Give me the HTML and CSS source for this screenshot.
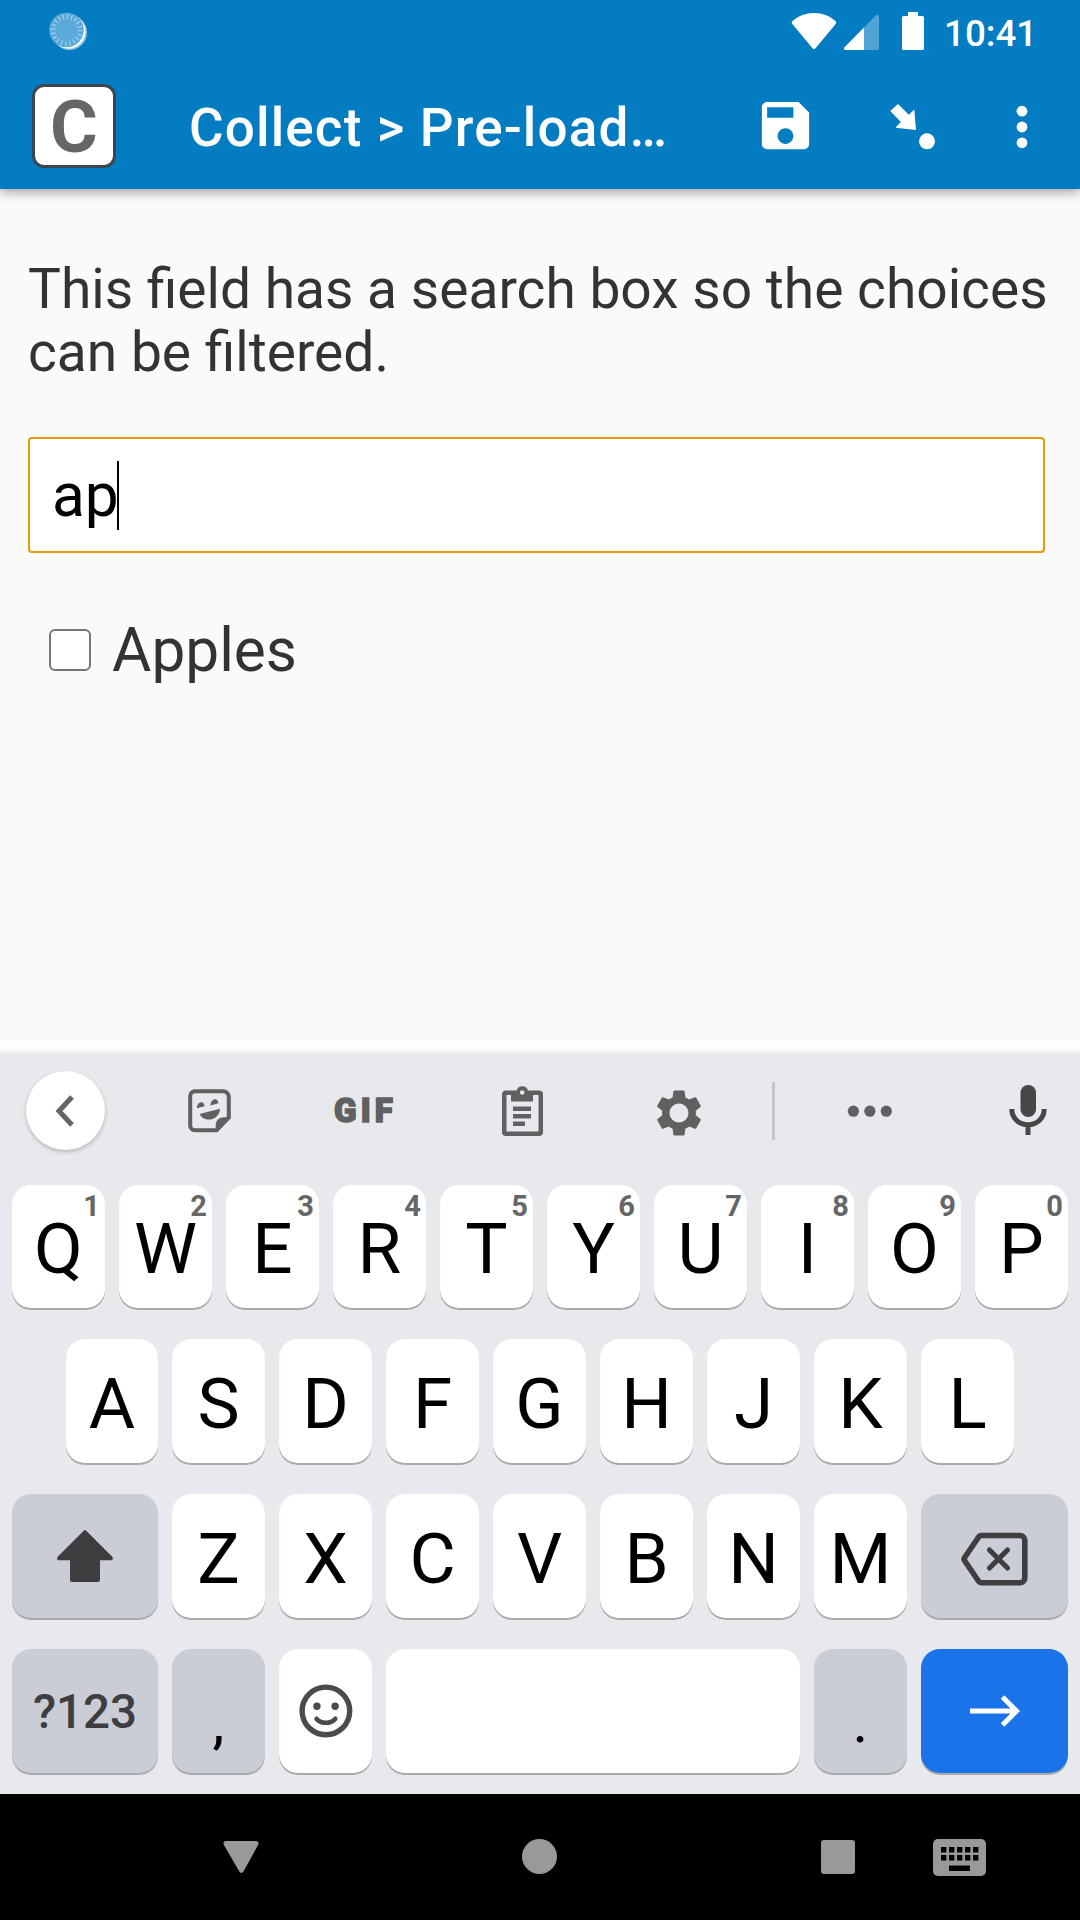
FILE: index.html
```html
<!DOCTYPE html>
<html lang="en">
<head>
<meta charset="utf-8">
<title>Collect</title>
<link rel="stylesheet" href="styles.css">
</head>
<body>
<div class="phone">
  <header class="header">
    <div class="status">
      <svg class="spinner" width="40" height="40" viewBox="48 11 40 40">
        <circle cx="69.5" cy="32.5" r="17.5" fill="#8fc4e4"/>
        <circle cx="68.5" cy="31.5" r="17" fill="#fff"/>
        <circle cx="66.5" cy="30" r="17.3" fill="#5aa9d8"/>
        <circle cx="66.5" cy="30" r="13.5" fill="none" stroke="#a3cfe9" stroke-width="5" stroke-dasharray="1.2 3.04"/>
      </svg>
      <div class="status-right">
        <svg class="wifi" width="46" height="38" viewBox="791 12 46 38"><path d="M814 49c-.8 0-1.300-.4-1.900-1.200L792.300 24c-.8-1-.7-2.300.3-3.100C798.300 16 805.700 13 814 13s15.700 3 21.400 7.900c1 .8 1.100 2.100.3 3.100l-19.800 23.800c-.6.8-1.100 1.200-1.900 1.200z" fill="#fff"/></svg>
        <svg class="signal" width="36" height="36" viewBox="844 15 36 36"><path d="M864 27.500l11.800-12c1.200-1.200 3.200-.5 3.200 1.200V48.500a1.500 1.500 0 0 1-1.500 1.500H864z" fill="#50a4d5"/><path d="M864 27.500V50H845.500c-1.500 0-2-1.800-1-2.800z" fill="#fff"/></svg>
        <svg class="battery" width="22" height="38" viewBox="902 12 22 38"><path d="M908 12h10v4h4.500a1.500 1.500 0 0 1 1.500 1.500v31a1.500 1.500 0 0 1-1.500 1.500h-19a1.500 1.500 0 0 1-1.500-1.500v-31a1.500 1.500 0 0 1 1.500-1.500h4.500z" fill="#fff"/></svg>
        <span class="clock">10:41</span>
      </div>
    </div>
    <div class="appbar">
      <div class="logo">C</div>
      <h1 class="title">Collect &gt; Pre-load…</h1>
      <svg class="save" width="63" height="63" viewBox="0 0 24 24"><path fill="#fff" d="M17 3H5c-1.110 0-2 .9-2 2v14c0 1.100.890 2 2 2h14c1.100 0 2-.9 2-2V7l-4-4zm-5 16c-1.660 0-3-1.340-3-3s1.340-3 3-3 3 1.340 3 3-1.340 3-3 3zm3-10H5V5h10v4z"/></svg>
      <svg class="goto" width="46" height="46" viewBox="890 104 46 46"><path d="M890.200 111l7.800-7 10.800 10.700 5.500-5.300L916 130l-20.600-2.300 5.500-5.700z" fill="#fff"/><circle cx="927" cy="141.300" r="8" fill="#fff"/></svg>
      <svg class="more" width="12" height="44" viewBox="1016.400 104.500 12 44" fill="#fff"><circle cx="1022.400" cy="110.700" r="5.400"/><circle cx="1022.400" cy="126.500" r="5.400"/><circle cx="1022.400" cy="142.300" r="5.400"/></svg>
    </div>
  </header>

  <main class="form">
    <p class="question">This field has a search box so the choices can be filtered.</p>
    <div class="search"><span>ap</span><i class="caret"></i></div>
    <div class="choice"><span class="box"></span><span class="label">Apples</span></div>
  </main>

  <section class="keyboard">
    <div class="tools">
      <div class="back"><svg width="20" height="32" viewBox="0 0 20 32"><path d="M17 2L4 16l13 14" fill="none" stroke="#646567" stroke-width="5"/></svg></div>
      <svg class="sticker" width="44" height="44" viewBox="188 1089 44 44"><path d="M195 1091.200h28a5.800 5.800 0 0 1 5.800 5.800v20.500L216.500 1130.300H195a4.800 4.800 0 0 1-4.800-4.800V1096a4.800 4.800 0 0 1 4.800-4.800z" fill="none" stroke="#5f6062" stroke-width="4"/><path d="M231 1117.500l-13.500 14.500h-1.800v-7c0-4.500 3.500-7.800 8-7.800z" fill="#5f6062"/><path d="M197 1108.300c0-7 7.500-8 7.500-2zM210.500 1105.500c0-7.500 7.800-8.500 7.800-2.300zM199.500 1114l20.500-5.300c-.5 12-16 14.500-20.500 5.300z" fill="#5f6062"/></svg>
      <span class="gif">GIF</span>
      <svg class="clip" width="42" height="52" viewBox="502 1085 42 52"><path fill="#5f6062" fill-rule="evenodd" d="M506 1090.500h10.500a6 6 0 0 1 11.500 0H539a4 4 0 0 1 4 4V1132a4 4 0 0 1-4 4H506a4 4 0 0 1-4-4v-37.500a4 4 0 0 1 4-4zm.5 4.500v36.500h32V1095H533v6.500h-22V1095zM522.200 1090.200a2.300 2.300 0 1 0 .01 4.600 2.300 2.300 0 0 0-.01-4.600zM513 1106.500h18v4.500h-18zm0 7.500h18v4.500h-18zm0 7.500h12v4.500h-12z"/></svg>
      <svg class="gear" width="54" height="54" viewBox="0 0 24 24"><path fill="#5f6062" d="M19.430 12.980c.04-.32.07-.64.07-.98s-.03-.66-.07-.98l2.110-1.650c.19-.15.24-.42.12-.64l-2-3.460c-.12-.22-.39-.3-.61-.22l-2.490 1c-.52-.4-1.080-.73-1.690-.98l-.38-2.650C14.460 2.180 14.250 2 14 2h-4c-.25 0-.46.180-.49.420l-.38 2.650c-.61.250-1.170.590-1.690.98l-2.490-1c-.23-.09-.49 0-.61.220l-2 3.460c-.13.220-.07.490.12.640l2.110 1.650c-.04.320-.07.650-.07.980s.03.660.07.980l-2.110 1.650c-.19.150-.24.420-.12.640l2 3.460c.12.220.39.300.61.220l2.490-1c.52.400 1.080.730 1.690.98l.38 2.650c.03.240.24.420.49.420h4c.25 0 .46-.18.49-.42l.38-2.650c.61-.25 1.170-.59 1.690-.98l2.490 1c.23.090.49 0 .61-.22l2-3.460c.12-.22.07-.49-.12-.64l-2.110-1.650zM12 16.200c-2.300 0-4.200-1.900-4.200-4.200s1.900-4.200 4.200-4.200 4.200 1.900 4.200 4.200-1.900 4.200-4.200 4.200z"/></svg>
      <i class="rule"></i>
      <svg class="dots" width="46" height="12" viewBox="0 0 46 12" fill="#5f6062"><circle cx="6.400" cy="6.200" r="5.600"/><circle cx="22.900" cy="6.200" r="5.600"/><circle cx="39.300" cy="6.200" r="5.600"/></svg>
      <svg class="mic" width="38" height="52" viewBox="1008.500 1084 38 52"><rect x="1020" y="1085" width="15.500" height="32" rx="7.750" fill="#454648"/><path d="M1011.300 1109c0 9 7 15.800 16.200 15.800s16.200-6.800 16.200-15.800M1027.500 1124v11" fill="none" stroke="#454648" stroke-width="5"/></svg>
    </div>

    <div class="keys">
      <div class="row top">
        <div class="key">Q<sup>1</sup></div><div class="key">W<sup>2</sup></div><div class="key">E<sup>3</sup></div><div class="key">R<sup>4</sup></div><div class="key">T<sup>5</sup></div><div class="key">Y<sup>6</sup></div><div class="key">U<sup>7</sup></div><div class="key">I<sup>8</sup></div><div class="key">O<sup>9</sup></div><div class="key">P<sup>0</sup></div>
      </div>
      <div class="row middle">
        <div class="key">A</div><div class="key">S</div><div class="key">D</div><div class="key">F</div><div class="key">G</div><div class="key">H</div><div class="key">J</div><div class="key">K</div><div class="key">L</div>
      </div>
      <div class="row">
        <div class="key wide alt icon"><svg width="56" height="52" viewBox="57 1530 56 52"><path d="M83.700 1530.700c.8-.8 1.800-.8 2.600 0L112 1556.500c1.700 1.800.8 3.800-1.200 3.800H100V1580a2 2 0 0 1-2 2H72a2 2 0 0 1-2-2v-19.700H59.200c-2 0-2.900-2-1.200-3.800z" fill="#3e3e40"/></svg></div>
        <div class="key">Z</div><div class="key">X</div><div class="key">C</div><div class="key">V</div><div class="key">B</div><div class="key">N</div><div class="key">M</div>
        <div class="key wide alt icon delete"><svg width="68" height="54" viewBox="960 1531.500 68 54" fill="none" stroke="#3e3e40"><path d="M980.500 1535H1019a4.800 4.800 0 0 1 4.800 4.800v37.600a4.800 4.800 0 0 1-4.800 4.800H980.500c-1.500 0-2.500-.8-3.400-2.200L963.500 1560c-.8-1.200-.8-1.600 0-2.800L977.100 1537.200c.9-1.400 1.900-2.200 3.400-2.200z" stroke-width="5.600"/><path d="M988.500 1549.500l18 18M1006.500 1549.500l-18 18" stroke-width="5.200" stroke-linecap="round"/></svg></div>
      </div>
      <div class="row">
        <div class="key wide alt symbols">?123</div>
        <div class="key alt punct">,</div>
        <div class="key icon"><svg width="54" height="54" viewBox="298.500 1683.500 54 54" fill="none" stroke="#4b4b4d"><circle cx="325.400" cy="1710.400" r="23.800" stroke-width="5.400"/><path d="M316 1718.300c5 5.300 13.800 5.300 18.800 0" stroke-width="4.600" stroke-linecap="round"/><circle cx="316.400" cy="1705.700" r="3.700" fill="#4b4b4d" stroke="none"/><circle cx="334.600" cy="1705.700" r="3.700" fill="#4b4b4d" stroke="none"/></svg></div>
        <div class="key space"></div>
        <div class="key alt punct">.</div>
        <div class="key wide enter icon"><svg width="50" height="32" viewBox="969 1694.500 50 32"><path d="M969 1710.500h46M1001.500 1696.500l14 14-14 14" fill="none" stroke="#fff" stroke-width="5"/></svg></div>
      </div>
    </div>
  </section>

  <nav class="nav">
    <svg class="nav-back" width="36" height="33" viewBox="223 1841 36 33"><path d="M226 1841h30c2.200 0 3.200 2 2.200 3.800L243.500 1871.500c-1.100 1.900-3.100 1.900-4.200 0L223.800 1844.800c-1-1.800 0-3.800 2.200-3.800z" fill="#999"/></svg>
    <i class="nav-home"></i>
    <i class="nav-recent"></i>
    <svg class="nav-ime" width="54" height="38" viewBox="933 1839 54 38"><rect x="933" y="1839" width="53" height="37" rx="5" fill="#999"/><path d="M941 1849.700h38M941 1857.700h38" stroke="#000" stroke-width="5.400" stroke-dasharray="5.400 2.600"/><path d="M949 1865.500h21v5.500h-21z"/></svg>
  </nav>
</div>
</body>
</html>
```

FILE: styles.css
```css
* { box-sizing: border-box; }
body { margin: 0; font-family: Roboto, "Liberation Sans", sans-serif; }
svg, i { display: block; flex: none; }

.phone { width: 1080px; height: 1920px; display: flex; flex-direction: column; overflow: hidden; background: #fafafa; }

.header { height: 189px; flex: none; background: #037cc2; color: #fff; box-shadow: 0 2px 12px rgba(0, 0, 0, .42); z-index: 1; }
.status { height: 60px; display: flex; justify-content: space-between; padding: 11px 45px 0 48px; }
.status-right { display: flex; align-items: flex-start; }
.wifi { margin-top: 1px; }
.signal { margin: 4px 0 0 7px; }
.battery { margin: 1px 0 0 22px; }
.clock { width: 91px; margin-left: 20px; font-size: 36.750px; font-weight: 500; line-height: 45px; white-space: nowrap; }

.appbar { height: 129px; display: flex; align-items: flex-start; padding-left: 32px; }
.logo { width: 84px; height: 84px; margin-top: 24px; border: 3px solid #3b4650; border-radius: 12px; background: #fff; color: #666; font-size: 73px; font-weight: 700; line-height: 80px; text-align: center; }
.title { width: 490px; margin: 36px 0 0 73px; font-size: 53px; font-weight: 500; line-height: 64px; letter-spacing: 1.150px; white-space: nowrap; }
.save { margin: 34px 0 0 75px; }
.goto { margin: 44px 0 0 73px; }
.more { margin: 44.500px 0 0 80.400px; }

.form { flex: 1; padding: 69px 28px 0; color: #333; }
.question { margin: 0; font-size: 55.125px; line-height: 63px; width: 1040px; }
.search { display: flex; align-items: center; width: 1017px; height: 116px; margin-top: 53px; padding-left: 22px; border: 2px solid #e59a06; border-radius: 4px; background: #fff; color: #000; font-size: 60.375px; line-height: 70px; }
.search span { padding-top: 1px; }
.caret { width: 2px; height: 69px; margin-left: -2px; background: #000; }
.choice { display: flex; align-items: center; gap: 21px; margin: 62px 0 0 21px; height: 70px; font-size: 60.375px; line-height: 70px; }
.label { padding-top: 2px; }
.box { width: 42px; height: 42px; border: 2.500px solid #767676; border-radius: 6px; background: #fff; }

.keyboard { height: 752px; flex: none; padding-top: 11px; background: linear-gradient(#fff, #fdfdfd 6px, #eeeeef 11px, #e8e9ed 11px); }
.tools { height: 132px; display: flex; align-items: flex-start; padding-left: 26px; }
.back { width: 79px; height: 79px; margin-top: 18px; padding-left: 29px; display: flex; align-items: center; border-radius: 50%; background: #fff; box-shadow: 0 2px 4px rgba(0, 0, 0, .22); }
.sticker { margin: 36px 0 0 83px; }
.gif { width: 66px; margin: 38px 0 0 102px; color: #5f6062; font-size: 33px; font-weight: 900; line-height: 40px; letter-spacing: 4.200px; -webkit-text-stroke: 1.500px #5f6062; }
.clip { margin: 32px 0 0 102px; }
.gear { margin: 32.500px 0 0 108px; }
.rule { width: 3px; height: 58px; margin: 29px 0 0 66px; background: #c5c6c8; }
.dots { margin: 52px 0 0 72px; }
.mic { margin: 31px 0 0 115.500px; }

.keys { display: flex; flex-direction: column; gap: 31px; padding: 0 12px; }
.row { display: flex; gap: 14px; height: 124px; }
.row.top { height: 123px; }
.row.middle { padding: 0 54px; }
.row.middle .key:first-child { flex: 0 0 92px; }
.key { position: relative; flex: 1; display: flex; align-items: center; justify-content: center; padding-top: 5px; border-radius: 19px; background: #fff; box-shadow: 0 2px #a9aaac; color: #000; font-size: 71px; line-height: 84px; }
.key sup { position: absolute; top: 4px; right: 5px; color: #666; font-size: 29px; font-weight: 700; line-height: 34px; }
.key.wide { flex: 0 0 146px; }
.key.wide:last-child { flex-basis: 147px; }
.alt { background: #cbcdd6; }
.icon { padding: 0; }
.delete { padding-top: 5px; }
.symbols { padding: 2px 0 0; font-size: 47.500px; font-weight: 500; color: #3e3e40; }
.punct { padding-top: 22px; font-size: 60px; }
.space { flex: 0 0 414px; }
.enter { background: #1a73e8; }

.nav { height: 126px; flex: none; display: flex; align-items: flex-start; padding: 45px 0 0 223px; background: #000; }
.nav-back { margin-top: 2px; }
.nav-home { width: 35px; height: 35px; margin-left: 263px; border-radius: 50%; background: #999; }
.nav-recent { width: 34px; height: 34px; margin: 1px 0 0 264px; border-radius: 3px; background: #999; }
.nav-ime { margin-left: 78px; }
```
